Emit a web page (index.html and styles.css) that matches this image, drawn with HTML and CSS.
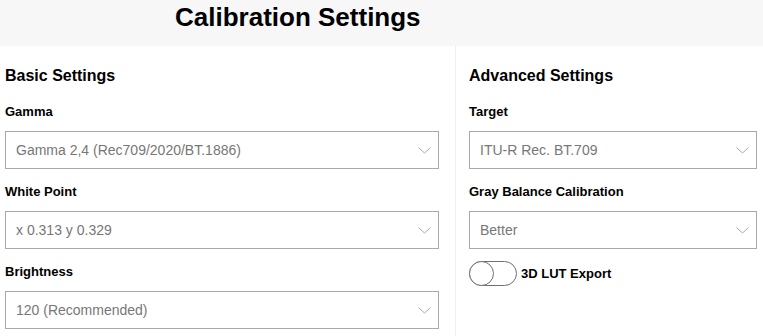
FILE: index.html
```html
<!DOCTYPE html>
<html lang="en">
<head>
  <meta charset="UTF-8" />
  <meta name="viewport" content="width=device-width, initial-scale=1" />
  <title>Calibration Settings</title>
  <link rel="stylesheet" href="styles.css">
</head>
<body>

  <header class="topbar">
    <h1>Calibration Settings</h1>
  </header>

  <main class="settings">
    <section class="col col-basic">
      <h2>Basic Settings</h2>

      <div class="field">
        <label>Gamma</label>
        <div class="select">
          <span>Gamma 2,4 (Rec709/2020/BT.1886)</span>
          <svg class="chevron" width="13" height="7" viewBox="0 0 13 7"><path d="M0.5 0.5 L6.5 6 L12.5 0.5" fill="none" stroke="#a8a8a8" stroke-width="1"/></svg>
        </div>
      </div>

      <div class="field">
        <label>White Point</label>
        <div class="select">
          <span>x 0.313 y 0.329</span>
          <svg class="chevron" width="13" height="7" viewBox="0 0 13 7"><path d="M0.5 0.5 L6.5 6 L12.5 0.5" fill="none" stroke="#a8a8a8" stroke-width="1"/></svg>
        </div>
      </div>

      <div class="field">
        <label>Brightness</label>
        <div class="select">
          <span>120 (Recommended)</span>
          <svg class="chevron" width="13" height="7" viewBox="0 0 13 7"><path d="M0.5 0.5 L6.5 6 L12.5 0.5" fill="none" stroke="#a8a8a8" stroke-width="1"/></svg>
        </div>
      </div>
    </section>

    <section class="col col-advanced">
      <h2>Advanced Settings</h2>

      <div class="field">
        <label>Target</label>
        <div class="select">
          <span>ITU-R Rec. BT.709</span>
          <svg class="chevron" width="13" height="7" viewBox="0 0 13 7"><path d="M0.5 0.5 L6.5 6 L12.5 0.5" fill="none" stroke="#a8a8a8" stroke-width="1"/></svg>
        </div>
      </div>

      <div class="field">
        <label>Gray Balance Calibration</label>
        <div class="select">
          <span>Better</span>
          <svg class="chevron" width="13" height="7" viewBox="0 0 13 7"><path d="M0.5 0.5 L6.5 6 L12.5 0.5" fill="none" stroke="#a8a8a8" stroke-width="1"/></svg>
        </div>
      </div>

      <div class="toggle-row">
        <span class="toggle"><span class="knob"></span></span>
        <span class="toggle-label">3D LUT Export</span>
      </div>
    </section>
  </main>

</body>
</html>
```

FILE: styles.css
```css
* {
  box-sizing: border-box;
  margin: 0;
  padding: 0;
}

body, html {
  height: 100%;
  font-family: 'Liberation Sans', Arial, sans-serif;
  color: #000;
  background: #fff;
}

body {
  display: flex;
  flex-direction: column;
}

/* Top title bar */
.topbar {
  height: 46px;
  background-color: #f7f7f7;
  padding-left: 175px;
}

.topbar h1 {
  font-size: 26px;
  font-weight: bold;
  line-height: 34px;
}

/* Two columns */
.settings {
  flex: 1;
  display: flex;
}

.col {
  padding-top: 20px;
}

.col-basic {
  width: 456px;
  padding-left: 5px;
  padding-right: 16px;
  border-right: 1px solid #efefef;
}

.col-advanced {
  flex: 1;
  padding-left: 13px;
  padding-right: 6px;
}

h2 {
  font-size: 16px;
  font-weight: bold;
  line-height: 20px;
}

.field label {
  display: block;
  font-size: 13px;
  font-weight: bold;
  line-height: 16px;
  margin-top: 18px;
  margin-bottom: 11px;
}

.field + .field label {
  margin-top: 15px;
}

.select {
  height: 38px;
  border: 1px solid #a9a9a9;
  display: flex;
  align-items: center;
  justify-content: space-between;
  padding: 0 7px 0 10px;
  font-size: 14px;
  color: #777;
}

.chevron {
  display: block;
  margin-top: 1px;
}

/* Toggle switch */
.toggle-row {
  display: flex;
  align-items: center;
  gap: 4px;
  margin-top: 12px;
}

.toggle {
  position: relative;
  width: 48px;
  height: 25px;
  border: 1px solid #6f6f6f;
  border-radius: 13px;
  background: #fff;
}

.toggle .knob {
  position: absolute;
  left: -1px;
  top: -1px;
  width: 25px;
  height: 25px;
  border: 1px solid #6f6f6f;
  border-radius: 50%;
  background: #fff;
}

.toggle-label {
  font-size: 13px;
  font-weight: bold;
}
```
